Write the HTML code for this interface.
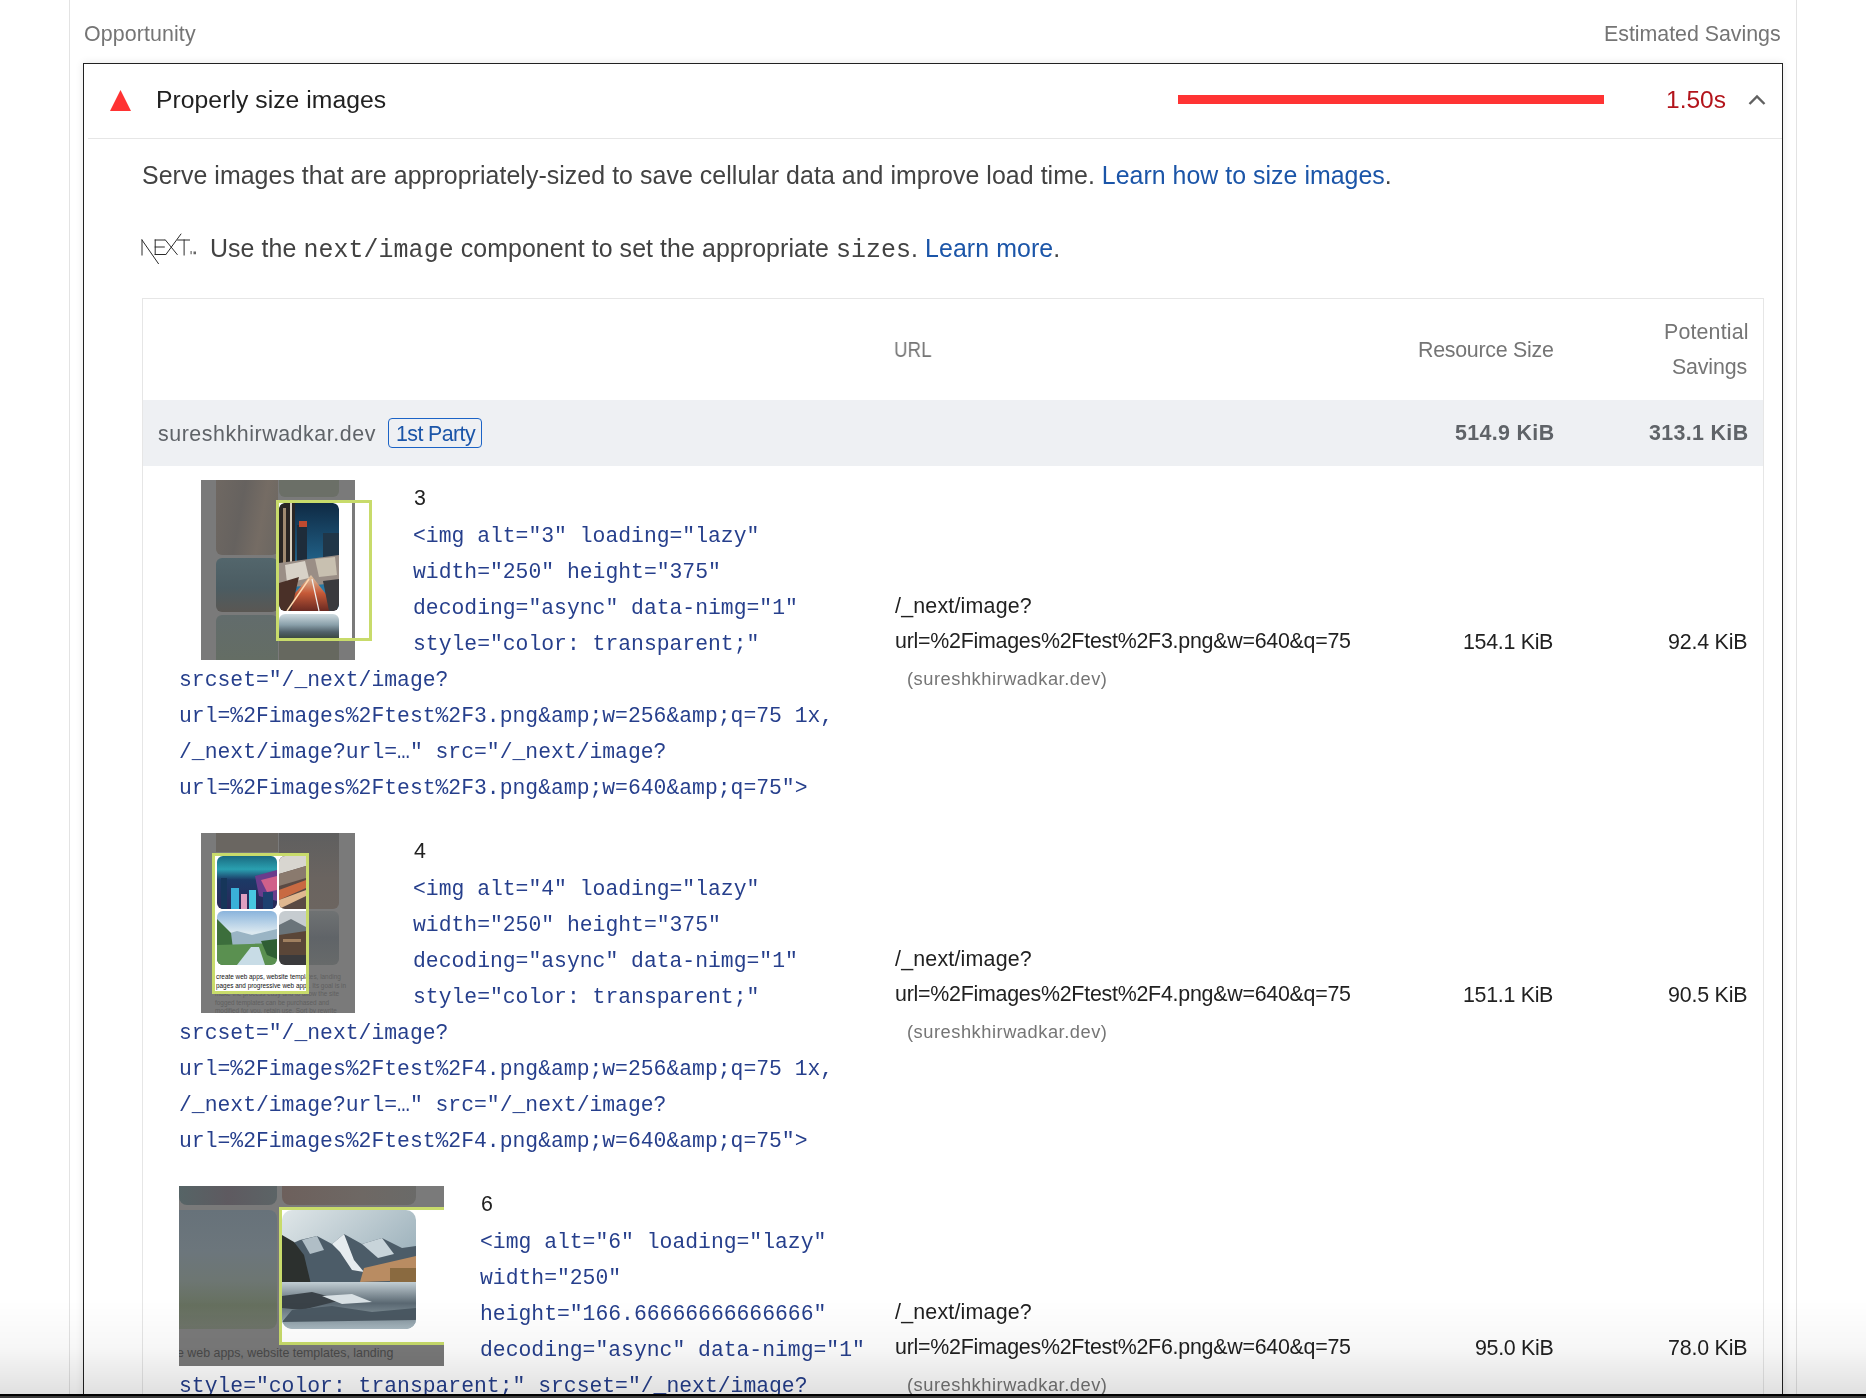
<!DOCTYPE html>
<html><head><meta charset="utf-8"><style>
html,body{margin:0;padding:0;background:#fff;width:1866px;height:1398px;overflow:hidden;position:relative;font-family:'Liberation Sans', sans-serif;}
.t{position:absolute;white-space:nowrap;will-change:transform;}
.b{position:absolute;}
.m{font-family:'Liberation Mono', monospace;}
svg.b{filter:blur(0.35px);}
</style></head><body>
<div class="b" style="left:69px;top:0px;width:1px;height:1398px;background:#e3e3e3"></div>
<div class="b" style="left:1796px;top:0px;width:1px;height:1398px;background:#e3e3e3"></div>
<div class="t" style="top:19.90px;font-size:21.4px;line-height:29.96px;color:#757575;letter-spacing:0.1px;left:84.00px;">Opportunity</div>
<div class="t" style="top:20.00px;font-size:21.4px;line-height:29.96px;color:#757575;letter-spacing:-0.03px;right:85.50px;">Estimated Savings</div>
<div class="b" style="left:83px;top:63px;width:1700px;height:1337px;border:1px solid #222;border-bottom:none;box-sizing:border-box;background:#fff;box-shadow:0 0 8px rgba(0,0,0,0.1)"></div>
<svg class="b" style="left:109px;top:89px" width="23" height="23" viewBox="0 0 23 23"><polygon points="11.5,1 22,22 1,22" fill="#f33"/></svg>
<div class="t" style="top:82.55px;font-size:24.7px;line-height:34.58px;color:#212121;letter-spacing:0.05px;left:155.80px;">Properly size images</div>
<div class="b" style="left:1178px;top:95px;width:426px;height:9px;background:#f33"></div>
<div class="t" style="top:82.56px;font-size:24.5px;line-height:34.3px;color:#b3141b;left:1665.80px;">1.50s</div>
<svg class="b" style="left:1746px;top:92px" width="22" height="16" viewBox="0 0 22 16"><polyline points="3.5,12 11,4.5 18.5,12" fill="none" stroke="#616161" stroke-width="2.4"/></svg>
<div class="b" style="left:88px;top:138px;width:1694px;height:1px;background:#e6e6e6"></div>
<div class="t" style="top:157.94px;font-size:24.9px;line-height:34.86px;color:#424242;letter-spacing:0.06px;left:141.90px;">Serve images that are appropriately-sized to save cellular data and improve load time. <span style="color:#1b55a8;letter-spacing:0.03px">Learn how to size images</span>.</div>
<svg class="b" style="left:140px;top:232px" width="60" height="34" viewBox="0 0 60 34">
<g fill="none" stroke="#2a2a2a" stroke-width="1" stroke-linecap="square">
<path d="M2,8 V23"/>
<path d="M2,8 L18.4,31.6"/>
<path d="M15.2,8 V22.5 M15.2,8 H24.8 M15.2,15 H24.3 M15.2,22.5 H25.4"/>
<path d="M25.4,8 L37.2,22.5"/>
<path d="M25.9,22.5 L40.9,2.1"/>
<path d="M37.7,8 H49.5 M44.1,8 V23"/>
</g>
<path d="M50.5,19 h1.2 v3.3 h-1.2z M53.5,19.5 h2.5 v2.8 h-2.5z" fill="#666"/>
</svg>
<div class="t" style="top:230.54px;font-size:24.9px;line-height:34.86px;color:#424242;letter-spacing:0.09px;left:209.80px;">Use the <span class="m">next/image</span> component to set the appropriate <span class="m">sizes</span>. <span style="color:#1b55a8">Learn more</span>.</div>
<div class="b" style="left:142px;top:298px;width:1622px;height:1102px;border:1px solid #e6e6e6;border-bottom:none;box-sizing:border-box"></div>
<div class="t" style="top:317.50px;font-size:21.4px;line-height:29.96px;color:#757575;letter-spacing:0.15px;right:117.70px;">Potential</div>
<div class="t" style="top:353.40px;font-size:21.4px;line-height:29.96px;color:#757575;letter-spacing:-0.17px;right:119.00px;">Savings</div>
<div class="t" style="top:335.80px;font-size:21.4px;line-height:29.96px;color:#757575;left:894.20px;transform:scaleX(0.875);transform-origin:0 0;">URL</div>
<div class="t" style="top:335.60px;font-size:21.4px;line-height:29.96px;color:#757575;letter-spacing:-0.27px;right:312.80px;">Resource Size</div>
<div class="b" style="left:143px;top:400px;width:1620px;height:66px;background:#eef0f3"></div>
<div class="t" style="top:420.40px;font-size:21.4px;line-height:29.96px;color:#5f6368;letter-spacing:0.55px;left:157.60px;">sureshkhirwadkar.dev</div>
<div class="b" style="left:388px;top:418px;width:94px;height:30px;border:1px solid #1b63c6;border-radius:4px;box-sizing:border-box"></div>
<div class="t" style="top:419.90px;font-size:21.4px;line-height:29.96px;color:#1b55a8;letter-spacing:-0.6px;left:395.70px;">1st Party</div>
<div class="t" style="top:419.10px;font-size:21.4px;line-height:29.96px;color:#5f6368;letter-spacing:0.35px;font-weight:700;right:312.00px;">514.9 KiB</div>
<div class="t" style="top:419.10px;font-size:21.4px;line-height:29.96px;color:#5f6368;letter-spacing:0.35px;font-weight:700;right:118.00px;">313.1 KiB</div>
<div class="b" style="left:201px;top:480px;width:154px;height:180px;background:#7a7a7a;overflow:hidden">
<div class="b" style="left:15px;top:0;width:62px;height:75px;background:linear-gradient(100deg,#6f6862 0%,#66625f 40%,#756c64 70%,#6a6661 100%);border-radius:0 0 6px 6px"></div>
<div class="b" style="left:15px;top:78px;width:62px;height:54px;background:linear-gradient(180deg,#53666c 0%,#4b5c62 55%,#5a5753 100%);border-radius:6px"></div>
<div class="b" style="left:15px;top:135px;width:62px;height:45px;background:linear-gradient(180deg,#626c6c 0%,#646d64 100%);border-radius:6px 6px 0 0"></div>
<div class="b" style="left:78px;top:0;width:60px;height:17px;background:#6b6f67;border-radius:0 0 6px 6px"></div>
<div class="b" style="left:78px;top:160px;width:60px;height:20px;background:#66685f"></div>
</div>
<div class="b" style="left:276px;top:500px;width:96px;height:141px;border:3px solid #c8db6b;box-sizing:border-box;background:#fff">
<svg class="b" style="left:0;top:0;border-radius:6px" width="60" height="108" viewBox="0 0 60 108">
<defs><clipPath id="c3"><rect width="60" height="108" rx="6"/></clipPath>
<linearGradient id="sky3" x1="0" y1="0" x2="0" y2="1"><stop offset="0" stop-color="#0f2a44"/><stop offset="1" stop-color="#2f8fc0"/></linearGradient>
<linearGradient id="road3" x1="0" y1="0" x2="0" y2="1"><stop offset="0" stop-color="#e0c8a8"/><stop offset="0.5" stop-color="#c65a38"/><stop offset="1" stop-color="#6a2a22"/></linearGradient></defs>
<g clip-path="url(#c3)">
<rect width="60" height="108" fill="url(#sky3)"/>
<rect x="0" y="0" width="16" height="85" fill="#2a2624"/>
<rect x="4" y="5" width="3" height="70" fill="#a08a70"/>
<rect x="11" y="0" width="2" height="80" fill="#d8d0c0"/>
<rect x="18" y="22" width="10" height="40" fill="#1e2c3a"/>
<rect x="20" y="18" width="8" height="6" fill="#c04a30"/>
<rect x="44" y="30" width="16" height="45" fill="#203648"/>
<polygon points="0,60 60,52 60,80 0,85" fill="#9a8e86"/>
<polygon points="6,62 26,58 30,75 8,80" fill="#d8d2c8"/>
<polygon points="36,56 56,54 58,72 40,74" fill="#c8c0b0"/>
<polygon points="0,108 32,72 60,108" fill="url(#road3)"/>
<polygon points="0,80 20,74 12,108 0,108" fill="#4a3028"/>
<polygon points="44,78 60,76 60,108 50,108" fill="#3a3a3e"/>
<line x1="8" y1="108" x2="30" y2="76" stroke="#ffd8b0" stroke-width="1.5"/>
<line x1="40" y1="108" x2="33" y2="76" stroke="#f0f0f0" stroke-width="1.2"/>
</g></svg>
<div class="b" style="left:0;top:111px;width:60px;height:24px;border-radius:6px 6px 0 0;background:linear-gradient(180deg,#cfdbe0 0%,#8aa0aa 45%,#51616a 75%,#3d4a42 100%)"></div>
<div class="b" style="left:73px;top:0;width:3px;height:135px;background:#7a7a7a"></div>
</div>
<div class="t" style="top:484.40px;font-size:21.4px;line-height:29.96px;color:#212121;left:413.50px;">3</div>
<div class="t" style="top:522.35px;left:413.00px;font-size:21.38px;line-height:29.93px;font-family:'Liberation Mono', monospace;color:#263f8c;">&lt;img alt="3" loading="lazy"</div>
<div class="t" style="top:558.35px;left:413.00px;font-size:21.38px;line-height:29.93px;font-family:'Liberation Mono', monospace;color:#263f8c;">width="250" height="375"</div>
<div class="t" style="top:594.35px;left:413.00px;font-size:21.38px;line-height:29.93px;font-family:'Liberation Mono', monospace;color:#263f8c;">decoding="async" data-nimg="1"</div>
<div class="t" style="top:630.35px;left:413.00px;font-size:21.38px;line-height:29.93px;font-family:'Liberation Mono', monospace;color:#263f8c;">style="color: transparent;"</div>
<div class="t" style="top:666.35px;left:179.40px;font-size:21.38px;line-height:29.93px;font-family:'Liberation Mono', monospace;color:#263f8c;">srcset="/_next/image?</div>
<div class="t" style="top:702.35px;left:179.40px;font-size:21.38px;line-height:29.93px;font-family:'Liberation Mono', monospace;color:#263f8c;">url=%2Fimages%2Ftest%2F3.png&amp;amp;w=256&amp;amp;q=75 1x,</div>
<div class="t" style="top:738.35px;left:179.40px;font-size:21.38px;line-height:29.93px;font-family:'Liberation Mono', monospace;color:#263f8c;">/_next/image?url=…" src="/_next/image?</div>
<div class="t" style="top:774.35px;left:179.40px;font-size:21.38px;line-height:29.93px;font-family:'Liberation Mono', monospace;color:#263f8c;">url=%2Fimages%2Ftest%2F3.png&amp;amp;w=640&amp;amp;q=75"&gt;</div>
<div class="t" style="top:591.80px;font-size:21.4px;line-height:29.96px;color:#212121;letter-spacing:0.2px;left:894.80px;">/_next/image?</div>
<div class="t" style="top:627.40px;font-size:21.4px;line-height:29.96px;color:#212121;letter-spacing:-0.25px;left:894.70px;">url=%2Fimages%2Ftest%2F3.png&amp;w=640&amp;q=75</div>
<div class="t" style="top:665.55px;font-size:18.3px;line-height:25.62px;color:#757575;letter-spacing:0.52px;left:906.50px;">(sureshkhirwadkar.dev)</div>
<div class="t" style="top:627.80px;font-size:21.4px;line-height:29.96px;color:#212121;letter-spacing:-0.3px;right:312.60px;">154.1 KiB</div>
<div class="t" style="top:627.80px;font-size:21.4px;line-height:29.96px;color:#212121;letter-spacing:-0.2px;right:118.60px;">92.4 KiB</div>
<div class="b" style="left:201px;top:833px;width:154px;height:180px;background:#7a7a7a;overflow:hidden">
<div class="b" style="left:15px;top:0;width:62px;height:19px;background:#6a6661"></div>
<div class="b" style="left:78px;top:0;width:60px;height:76px;background:linear-gradient(180deg,#5f5f5f 0%,#6a6460 60%,#6c6560 100%);border-radius:0 0 6px 6px"></div>
<div class="b" style="left:78px;top:78px;width:60px;height:54px;background:linear-gradient(180deg,#6f7273 0%,#606468 50%,#676a6a 100%);border-radius:6px"></div>
<div class="b" style="left:14px;top:140px;width:200px;font:6.4px/8.5px 'Liberation Sans',sans-serif;color:#606060;white-space:nowrap">create web apps, website templates, landing<br>pages and progressive web apps. Its goal is in<br>make the process easy and to allow the site<br>fogged templates can be purchased and<br>modified for you, retain use. Sort by rewrite</div>
</div>
<div class="b" style="left:212px;top:853px;width:97px;height:141px;border:3px solid #c8db6b;box-sizing:border-box;background:#fff;overflow:hidden">
<svg class="b" style="left:2px;top:0" width="60" height="53" viewBox="0 0 60 53">
<defs><clipPath id="t41"><rect width="60" height="53" rx="6"/></clipPath>
<linearGradient id="g41" x1="0" y1="0" x2="0" y2="1"><stop offset="0" stop-color="#1a6a80"/><stop offset="0.25" stop-color="#2aa0b0"/><stop offset="0.45" stop-color="#1c3a66"/><stop offset="1" stop-color="#2a2858"/></linearGradient></defs>
<g clip-path="url(#t41)">
<rect width="60" height="53" fill="url(#g41)"/>
<polygon points="38,20 60,14 60,45 42,40" fill="#6a3c8c"/>
<polygon points="44,24 60,20 60,34 50,36" fill="#d0608a"/>
<rect x="4" y="22" width="6" height="31" fill="#16365a"/>
<rect x="14" y="32" width="8" height="21" fill="#3ab0d8"/>
<rect x="24" y="38" width="6" height="15" fill="#e0a0c0"/>
<rect x="32" y="34" width="7" height="19" fill="#48c8e0"/>
<rect x="46" y="36" width="10" height="17" fill="#1e4070"/>
</g></svg>
<svg class="b" style="left:64px;top:0" width="27" height="53" viewBox="0 0 27 53">
<defs><clipPath id="t42"><rect width="33" height="53" rx="6"/></clipPath></defs>
<g clip-path="url(#t42)">
<rect width="27" height="53" fill="#5a4a44"/>
<polygon points="0,0 27,0 27,10 0,18" fill="#d8d6d0"/>
<polygon points="0,18 27,10 27,22 0,30" fill="#8a7a6e"/>
<polygon points="0,34 27,24 27,32 0,44" fill="#c86a42"/>
<polygon points="0,44 27,34 27,40 0,53" fill="#e0b890"/>
</g></svg>
<svg class="b" style="left:2px;top:55px" width="60" height="54" viewBox="0 0 60 54">
<defs><clipPath id="t43"><rect width="60" height="54" rx="6"/></clipPath>
<linearGradient id="g43" x1="0" y1="0" x2="0" y2="1"><stop offset="0" stop-color="#8ab4dc"/><stop offset="0.4" stop-color="#dce9f0"/><stop offset="1" stop-color="#b8d0d8"/></linearGradient></defs>
<g clip-path="url(#t43)">
<rect width="60" height="54" fill="url(#g43)"/>
<polygon points="0,26 20,20 35,24 60,18 60,34 0,36" fill="#9ab4c4"/>
<polygon points="0,8 14,22 18,54 0,54" fill="#3c6e3c"/>
<polygon points="0,34 60,32 60,54 0,54" fill="#5a9050"/>
<polygon points="20,54 34,36 42,36 48,54" fill="#c8dce6"/>
<polygon points="44,30 60,28 60,48 50,44" fill="#2f5e34"/>
</g></svg>
<svg class="b" style="left:64px;top:55px" width="27" height="54" viewBox="0 0 27 54">
<defs><clipPath id="t44"><rect width="33" height="54" rx="6"/></clipPath></defs>
<g clip-path="url(#t44)">
<rect width="27" height="54" fill="#c6ccd0"/>
<polygon points="0,14 12,8 27,16 27,30 0,30" fill="#6a747a"/>
<polygon points="0,24 27,20 27,44 0,44" fill="#5a4638"/>
<rect x="4" y="28" width="18" height="3" fill="#a08060"/>
<rect x="0" y="44" width="27" height="10" fill="#3a3a3c"/>
</g></svg>
<div class="b" style="left:1px;top:117px;width:120px;font:6.4px/8.5px 'Liberation Sans',sans-serif;color:#111;white-space:nowrap">create web apps, website templates<br>pages and progressive web apps. Its</div>
</div>
<div class="t" style="top:837.40px;font-size:21.4px;line-height:29.96px;color:#212121;left:413.50px;">4</div>
<div class="t" style="top:875.35px;left:413.00px;font-size:21.38px;line-height:29.93px;font-family:'Liberation Mono', monospace;color:#263f8c;">&lt;img alt="4" loading="lazy"</div>
<div class="t" style="top:911.35px;left:413.00px;font-size:21.38px;line-height:29.93px;font-family:'Liberation Mono', monospace;color:#263f8c;">width="250" height="375"</div>
<div class="t" style="top:947.35px;left:413.00px;font-size:21.38px;line-height:29.93px;font-family:'Liberation Mono', monospace;color:#263f8c;">decoding="async" data-nimg="1"</div>
<div class="t" style="top:983.35px;left:413.00px;font-size:21.38px;line-height:29.93px;font-family:'Liberation Mono', monospace;color:#263f8c;">style="color: transparent;"</div>
<div class="t" style="top:1019.35px;left:179.40px;font-size:21.38px;line-height:29.93px;font-family:'Liberation Mono', monospace;color:#263f8c;">srcset="/_next/image?</div>
<div class="t" style="top:1055.35px;left:179.40px;font-size:21.38px;line-height:29.93px;font-family:'Liberation Mono', monospace;color:#263f8c;">url=%2Fimages%2Ftest%2F4.png&amp;amp;w=256&amp;amp;q=75 1x,</div>
<div class="t" style="top:1091.35px;left:179.40px;font-size:21.38px;line-height:29.93px;font-family:'Liberation Mono', monospace;color:#263f8c;">/_next/image?url=…" src="/_next/image?</div>
<div class="t" style="top:1127.35px;left:179.40px;font-size:21.38px;line-height:29.93px;font-family:'Liberation Mono', monospace;color:#263f8c;">url=%2Fimages%2Ftest%2F4.png&amp;amp;w=640&amp;amp;q=75"&gt;</div>
<div class="t" style="top:944.80px;font-size:21.4px;line-height:29.96px;color:#212121;letter-spacing:0.2px;left:894.80px;">/_next/image?</div>
<div class="t" style="top:980.40px;font-size:21.4px;line-height:29.96px;color:#212121;letter-spacing:-0.25px;left:894.70px;">url=%2Fimages%2Ftest%2F4.png&amp;w=640&amp;q=75</div>
<div class="t" style="top:1018.55px;font-size:18.3px;line-height:25.62px;color:#757575;letter-spacing:0.52px;left:906.50px;">(sureshkhirwadkar.dev)</div>
<div class="t" style="top:980.80px;font-size:21.4px;line-height:29.96px;color:#212121;letter-spacing:-0.3px;right:312.60px;">151.1 KiB</div>
<div class="t" style="top:980.80px;font-size:21.4px;line-height:29.96px;color:#212121;letter-spacing:-0.2px;right:118.60px;">90.5 KiB</div>
<div class="b" style="left:179px;top:1186px;width:265px;height:180px;background:#7a7a7a;overflow:hidden">
<div class="b" style="left:0;top:0;width:98px;height:19px;background:linear-gradient(90deg,#566466 0%,#5e5a60 50%,#5c6466 100%);border-radius:0 0 8px 8px"></div>
<div class="b" style="left:103px;top:0;width:134px;height:19px;background:linear-gradient(90deg,#6d605c 0%,#6e6864 60%,#6a6a68 100%);border-radius:0 0 8px 8px"></div>
<div class="b" style="left:0;top:24px;width:98px;height:119px;background:linear-gradient(180deg,#67727a 0%,#6c767c 35%,#6d7672 60%,#66705f 80%,#6e746a 100%);border-radius:0 8px 8px 0"></div>
<div class="b" style="left:-2px;top:160px;width:260px;height:14px;color:#4a4a4a;font:12.4px/14px 'Liberation Sans',sans-serif;white-space:nowrap">e web apps, website templates, landing</div>
</div>
<div class="b" style="left:279px;top:1207px;width:165px;height:138px;border:3px solid #c8db6b;border-right:none;box-sizing:border-box;background:#fff">
<svg class="b" style="left:0;top:0" width="134" height="119" viewBox="0 0 134 119">
<defs><clipPath id="c6"><rect width="134" height="119" rx="10"/></clipPath>
<linearGradient id="sky6" x1="0" y1="0" x2="1" y2="1"><stop offset="0" stop-color="#dfe6e8"/><stop offset="1" stop-color="#7f9aa8"/></linearGradient>
<linearGradient id="ref6" x1="0" y1="0" x2="0" y2="1"><stop offset="0" stop-color="#c2ced4"/><stop offset="0.45" stop-color="#5a6872"/><stop offset="1" stop-color="#a8b8c0"/></linearGradient></defs>
<g clip-path="url(#c6)">
<rect width="134" height="119" fill="url(#sky6)"/>
<polygon points="0,38 18,30 35,26 50,34 62,24 80,34 100,28 120,38 134,36 134,72 0,72" fill="#4c5c68"/>
<polygon points="50,34 62,24 72,50 82,62 70,60 58,42" fill="#e6ecef"/>
<polygon points="80,34 100,28 112,44 96,48" fill="#c8d4da"/>
<polygon points="20,30 35,26 42,40 28,44" fill="#b0bec6"/>
<polygon points="82,58 134,46 134,70 78,72" fill="#b98c62"/>
<rect x="108" y="58" width="26" height="16" fill="#8a6a40"/>
<polygon points="0,25 12,32 22,45 28,70 30,82 0,86" fill="#2c302e"/>
<rect x="0" y="72" width="134" height="47" fill="url(#ref6)"/>
<polygon points="0,86 30,82 60,90 20,100 0,98" fill="#3a4248"/>
<polygon points="10,100 50,96 90,102 134,98 134,110 0,112" fill="#4a5862"/>
<polygon points="40,86 70,84 90,92 60,94" fill="#d8e0e4"/>
</g></svg>
</div>
<div class="t" style="top:1190.40px;font-size:21.4px;line-height:29.96px;color:#212121;left:480.50px;">6</div>
<div class="t" style="top:1228.35px;left:480.00px;font-size:21.38px;line-height:29.93px;font-family:'Liberation Mono', monospace;color:#263f8c;">&lt;img alt="6" loading="lazy"</div>
<div class="t" style="top:1264.35px;left:480.00px;font-size:21.38px;line-height:29.93px;font-family:'Liberation Mono', monospace;color:#263f8c;">width="250"</div>
<div class="t" style="top:1300.35px;left:480.00px;font-size:21.38px;line-height:29.93px;font-family:'Liberation Mono', monospace;color:#263f8c;">height="166.66666666666666"</div>
<div class="t" style="top:1336.35px;left:480.00px;font-size:21.38px;line-height:29.93px;font-family:'Liberation Mono', monospace;color:#263f8c;">decoding="async" data-nimg="1"</div>
<div class="t" style="top:1372.35px;left:179.40px;font-size:21.38px;line-height:29.93px;font-family:'Liberation Mono', monospace;color:#263f8c;">style="color: transparent;" srcset="/_next/image?</div>
<div class="t" style="top:1297.80px;font-size:21.4px;line-height:29.96px;color:#212121;letter-spacing:0.2px;left:894.80px;">/_next/image?</div>
<div class="t" style="top:1333.40px;font-size:21.4px;line-height:29.96px;color:#212121;letter-spacing:-0.25px;left:894.70px;">url=%2Fimages%2Ftest%2F6.png&amp;w=640&amp;q=75</div>
<div class="t" style="top:1371.55px;font-size:18.3px;line-height:25.62px;color:#757575;letter-spacing:0.52px;left:906.50px;">(sureshkhirwadkar.dev)</div>
<div class="t" style="top:1333.80px;font-size:21.4px;line-height:29.96px;color:#212121;letter-spacing:-0.3px;right:312.60px;">95.0 KiB</div>
<div class="t" style="top:1333.80px;font-size:21.4px;line-height:29.96px;color:#212121;letter-spacing:-0.2px;right:118.60px;">78.0 KiB</div>
<div class="b" style="left:0px;top:1300px;width:1866px;height:94px;background:linear-gradient(180deg,rgba(0,0,0,0) 0%,rgba(0,0,0,0.03) 50%,rgba(0,0,0,0.12) 100%)"></div>
<div class="b" style="left:0px;top:1394px;width:1866px;height:2px;background:#000"></div>
<div class="b" style="left:0px;top:1396px;width:1866px;height:2px;background:#3a3a3a"></div>
</body></html>
